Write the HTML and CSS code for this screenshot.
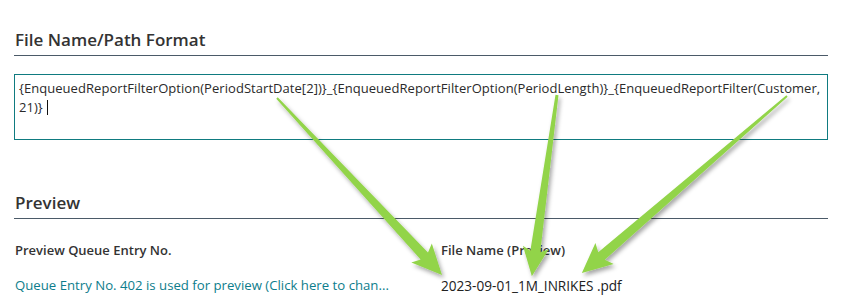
FILE: index.html
```html
<!DOCTYPE html>
<html>
<head>
<meta charset="utf-8">
<link rel="stylesheet" href="styles.css">
</head>
<body>
<div class="page">
  <section class="group">
    <h2 class="group-title">File Name/Path Format</h2>
    <div class="textbox">{EnqueuedReportFilterOption(PeriodStartDate[2])}_{EnqueuedReportFilterOption(PeriodLength)}_{EnqueuedReportFilter(Customer,<br>21)}<span class="caret"></span></div>
  </section>
  <section class="group preview">
    <h2 class="group-title">Preview</h2>
    <div class="fields">
      <div class="field">
        <div class="label">Preview Queue Entry No.</div>
        <a class="link">Queue Entry No. 402 is used for preview (Click here to chan...</a>
      </div>
      <div class="field">
        <div class="label">File Name (Preview)</div>
        <div class="value">2023-09-01_1M_INRIKES .pdf</div>
      </div>
    </div>
  </section>
  <svg class="arrows" width="844" height="301" viewBox="0 0 844 301">
    <defs>
      <filter id="sh" x="-20%" y="-20%" width="140%" height="140%">
        <feDropShadow dx="2" dy="3" stdDeviation="2" flood-color="#000" flood-opacity="0.35"/>
      </filter>
    </defs>
    <g filter="url(#sh)" fill="#92d44a">
      <g transform="translate(277 98) rotate(47)">
        <polygon points="0,-1 216,-5 212,-14 242,0 212,14 216,5 0,1"/>
      </g>
      <g transform="translate(557 95) rotate(97.9)">
        <polygon points="0,-1.5 158,-5 154,-13 183,0 154,13 158,5 0,1.5"/>
      </g>
      <g transform="translate(787 96) rotate(139.2)">
        <polygon points="0,-1 245,-5 241,-14 271,0 241,14 245,5 0,1"/>
      </g>
    </g>
  </svg>
</div>
</body>
</html>
```
FILE: styles.css
```css
html, body {
  margin: 0;
  padding: 0;
  background: #ffffff;
}
body {
  font-family: "Open Sans", "Noto Sans", sans-serif;
  color: #212121;
  width: 844px;
  height: 301px;
  overflow: hidden;
}
.page {
  position: relative;
  padding: 28px 16px 0 14px;
  height: 301px;
  box-sizing: border-box;
}
.group-title {
  margin: 0;
  font-size: 17px;
  font-weight: 600;
  color: #333333;
  line-height: 24px;
  padding-left: 1px;
  padding-bottom: 3px;
  border-bottom: 1px solid #4b5a68;
}
.textbox {
  margin-top: 18px;
  height: 66px;
  box-sizing: border-box;
  border: 1px solid #0f7b80;
  padding: 4px 4px 0 4px;
  font-size: 13px;
  line-height: 19px;
  letter-spacing: 0.05px;
  color: #2a2a2a;
  white-space: nowrap;
}
.caret {
  display: inline-block;
  width: 1px;
  height: 15px;
  background: #111;
  margin-left: 4px;
  vertical-align: -3px;
}
.preview {
  margin-top: 51px;
}
.fields {
  display: grid;
  grid-template-columns: 426px 1fr;
  padding-top: 23px;
  padding-left: 1px;
}
.label {
  font-size: 13px;
  font-weight: 600;
  color: #333333;
  line-height: 17px;
}
.link, .value {
  display: block;
  margin-top: 18px;
  font-size: 13px;
  line-height: 17px;
}
.link {
  color: #0d7d8c;
  font-size: 13.2px;
}
.value {
  color: #212121;
  font-size: 13.6px;
}
.arrows {
  position: absolute;
  left: 0;
  top: 0;
  pointer-events: none;
}
```
